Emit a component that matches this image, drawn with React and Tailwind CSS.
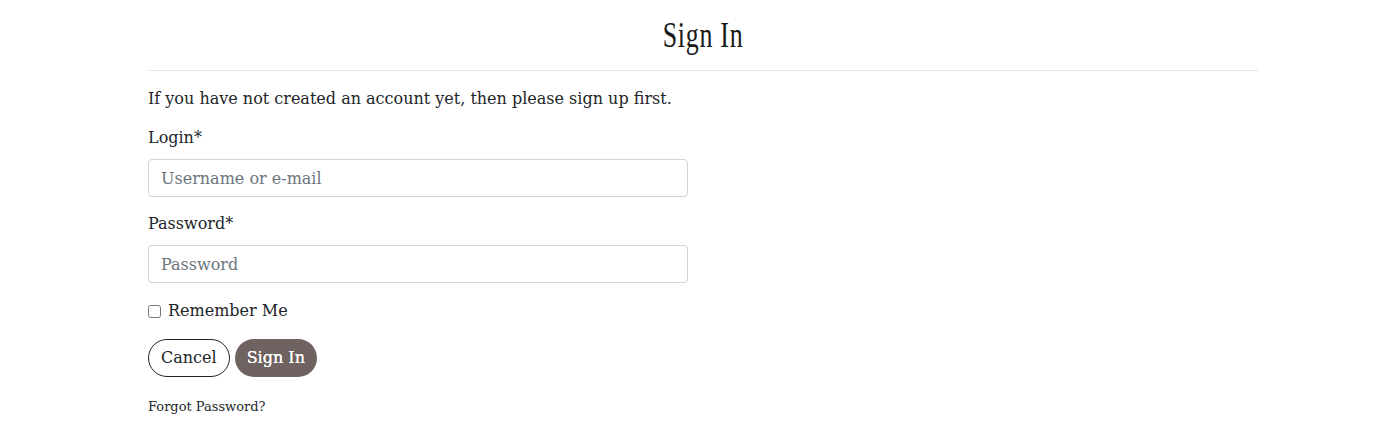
export default function App() {
  return (
    <div className="w-[1391px] h-[439px] bg-white text-[#212529]" style={{ fontFamily: '"DejaVu Serif", "Liberation Serif", serif' }}>
      <div className="w-[1110px] ml-[148px]">
        <div className="h-[71px] border-b border-[#e5e5e5] flex items-start justify-center pt-[13px]">
          <h1 className="inline-block text-[36px] leading-[44px] text-[#1a1a1a] tracking-[1px] scale-x-[0.72]" style={{ fontFamily: '"Liberation Serif", serif' }}>Sign In</h1>
        </div>
        <p className="mt-[16px] text-[16px] leading-[24px]">If you have not created an account yet, then please sign up first.</p>
        <div className="mt-[15px] text-[16px] leading-[24px]">Login*</div>
        <input className="mt-[9px] block w-[540px] h-[38px] border border-[#ced4da] rounded-[4px] px-[12px] text-[16px] placeholder:text-[#6c757d] outline-none" placeholder="Username or e-mail" />
        <div className="mt-[15px] text-[16px] leading-[24px]">Password*</div>
        <input className="mt-[9px] block w-[540px] h-[38px] border border-[#ced4da] rounded-[4px] px-[12px] text-[16px] placeholder:text-[#6c757d] outline-none" placeholder="Password" type="password" />
        <label className="mt-[16px] flex items-center gap-[7px] text-[16px] leading-[24px]">
          <input type="checkbox" className="w-[13px] h-[13px] m-0" />
          Remember Me
        </label>
        <div className="mt-[16px] flex gap-[5px]">
          <button className="h-[38px] px-[12px] rounded-full border border-[#212529] bg-white text-[16px]">Cancel</button>
          <button className="h-[38px] px-[12px] rounded-full bg-[#6e6360] text-white text-[16px] [text-shadow:0_0_0.6px_white]">Sign In</button>
        </div>
        <div className="mt-[20px] text-[13px]">Forgot Password?</div>
      </div>
    </div>
  );
}
